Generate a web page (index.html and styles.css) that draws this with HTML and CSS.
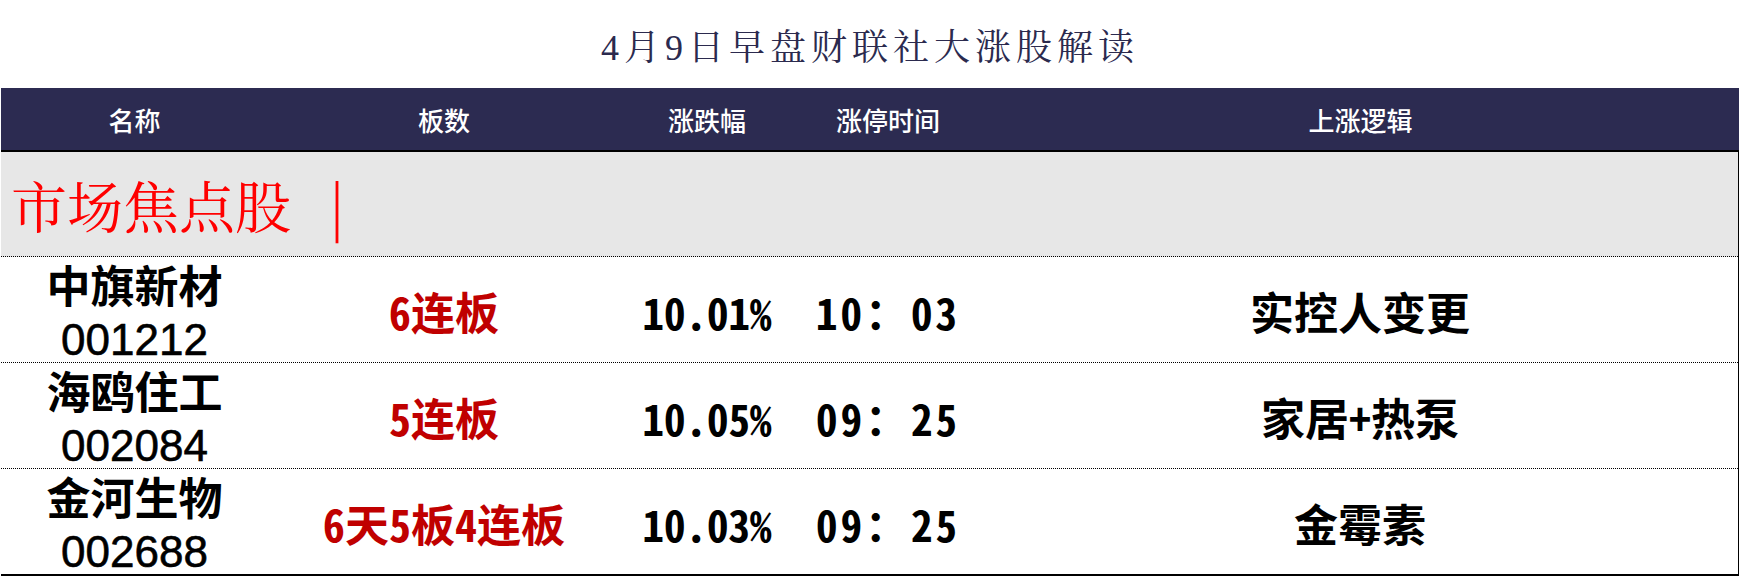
FILE: index.html
```html
<!DOCTYPE html>
<html lang="zh-CN">
<head>
<meta charset="utf-8">
<title>4月9日早盘财联社大涨股解读</title>
<link rel="stylesheet" href="styles.css">
</head>
<body>
<div class="page">
  <h1 class="title">4月9日早盘财联社大涨股解读</h1>
  <div class="table">
    <div class="row head">
      <div class="cell">名称</div>
      <div class="cell">板数</div>
      <div class="cell">涨跌幅</div>
      <div class="cell">涨停时间</div>
      <div class="cell">上涨逻辑</div>
    </div>
    <div class="section">市场焦点股<span class="bar">｜</span></div>
    <div class="row data">
      <div class="cell name"><span class="cn">中旗新材</span><span class="code">001212</span></div>
      <div class="cell board">6连板</div>
      <div class="cell pct">10.01%</div>
      <div class="cell time">10：03</div>
      <div class="cell logic">实控人变更</div>
    </div>
    <div class="row data">
      <div class="cell name"><span class="cn">海鸥住工</span><span class="code">002084</span></div>
      <div class="cell board">5连板</div>
      <div class="cell pct">10.05%</div>
      <div class="cell time">09：25</div>
      <div class="cell logic">家居+热泵</div>
    </div>
    <div class="row data last">
      <div class="cell name"><span class="cn">金河生物</span><span class="code">002688</span></div>
      <div class="cell board">6天5板4连板</div>
      <div class="cell pct">10.03%</div>
      <div class="cell time">09：25</div>
      <div class="cell logic">金霉素</div>
    </div>
  </div>
</div>
</body>
</html>
```

FILE: styles.css
```css
html, body {
  margin: 0;
  padding: 0;
  background: #ffffff;
}

.page {
  width: 1740px;
  height: 576px;
  overflow: hidden;
}

.title {
  margin: 0;
  height: 88px;
  display: flex;
  align-items: center;
  justify-content: center;
  font-family: "Liberation Serif", "Noto Serif CJK SC", "Noto Sans CJK SC", serif;
  font-weight: 400;
  font-size: 36px;
  letter-spacing: 5px;
  color: #2b2a4e;
}

.table {
  margin-left: 1px;
  width: 1737px;
  border-right: 1px solid #000;
  border-bottom: 2px solid #000;
  font-family: "Noto Sans CJK SC", sans-serif;
  font-feature-settings: "hwid";
}

.row {
  display: grid;
  grid-template-columns: 267px 352px 174px 188px 1fr;
}

.cell {
  display: flex;
  align-items: center;
  justify-content: center;
  white-space: nowrap;
}

.head {
  height: 62px;
  background: #2c2b51;
  border-bottom: 2px solid #000;
  margin-right: -1px;
  color: #ffffff;
  font-size: 26px;
  font-weight: 500;
}

.section {
  height: 104px;
  background: #e7e7e7;
  border-bottom: 1px dotted #000;
  display: flex;
  align-items: center;
  padding-left: 10px;
  font-family: "Noto Serif CJK SC", "Noto Sans CJK SC", serif;
  font-size: 56px;
  font-weight: 400;
  color: #ff0000;
}

.bar {
  margin-left: 32px;
  font-weight: 300;
}

.data {
  height: 105px;
  border-bottom: 1px dotted #000;
  font-size: 44px;
  font-weight: 700;
  line-height: 52px;
  color: #000;
}

.data.last {
  border-bottom: none;
}

.name {
  flex-direction: column;
  justify-content: flex-start;
  padding-top: 1px;
}

.name span {
  display: block;
}

.name .code {
  margin-top: 5px;
  line-height: 50px;
  font-family: "Liberation Sans", Arial, sans-serif;
  font-weight: 400;
  -webkit-text-stroke: 0.6px #000;
}

.board {
  color: #c00000;
}

.pct,
.time {
  font-size: 43px;
}

.time {
  letter-spacing: 3px;
}
```
